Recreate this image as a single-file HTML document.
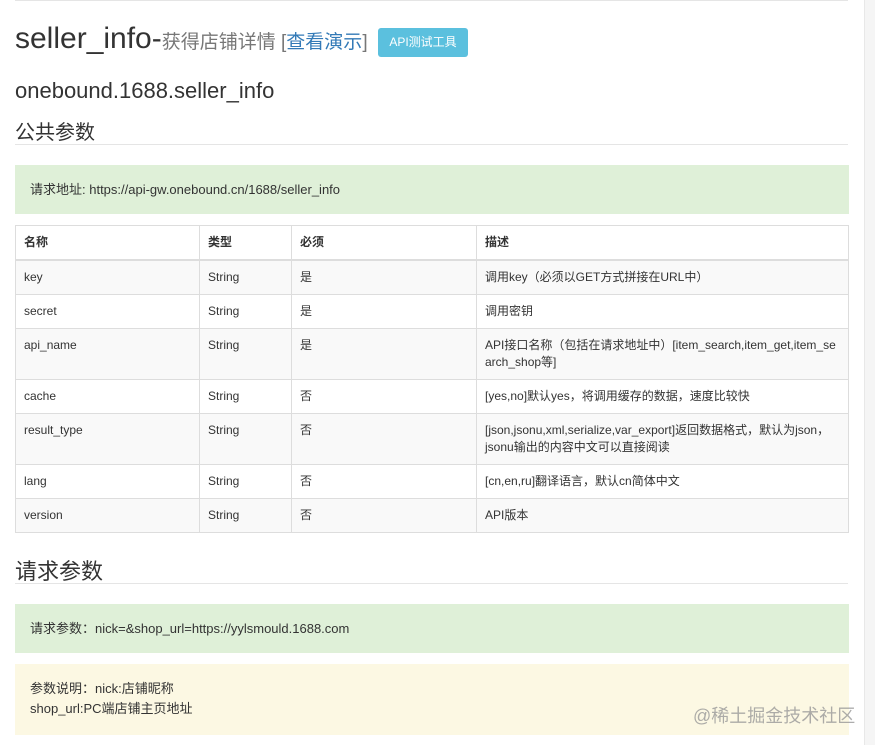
<!DOCTYPE html>
<html><head><meta charset="utf-8"><style>
body{margin:0;width:875px;height:745px;position:relative;overflow:hidden;background:#fff;font-family:"Liberation Sans","Noto Sans CJK SC",sans-serif;color:#333}
.a{position:absolute;white-space:nowrap}
.line{position:absolute;left:15px;width:833px;height:1px;background:#e5e5e5}
table{position:absolute;left:15px;top:225px;width:834px;border-collapse:collapse;font-size:12px}
td,th{border:1px solid #ddd;padding:8px 8px 0 8px;vertical-align:top;text-align:left;line-height:17px;white-space:normal}
th{font-weight:bold;height:25px;border-bottom:2px solid #ddd}
tbody tr:nth-child(odd){background:#f9f9f9}
tr.s td{height:25px}
tr.t td{height:42px}
.box{position:absolute;left:15px;width:834px;font-size:13px}
</style></head><body>
<div class="line" style="top:0"></div>
<div class="a" style="left:15px;top:22px;font-size:30px;color:#333">seller_info-<span style="font-size:19px;color:#777">获得店铺详情 [<span style="color:#337ab7">查看演示</span>]</span></div>
<div class="a" style="left:378px;top:28px;width:90px;height:29px;background:#5bc0de;border-radius:3px;color:#fff;font-size:12px;line-height:29px;text-align:center">API测试工具</div>
<div class="a" style="left:15px;top:78px;font-size:22px">onebound.1688.seller_info</div>
<div class="a" style="left:15px;top:116px;font-size:20px">公共参数</div>
<div class="line" style="top:144px"></div>
<div class="box" style="top:165px;height:49px;background:#dff0d8;line-height:49px;text-indent:15px">请求地址: https://api-gw.onebound.cn/1688/seller_info</div>
<table>
<colgroup><col style="width:184px"><col style="width:92px"><col style="width:185px"><col></colgroup>
<thead><tr><th>名称</th><th>类型</th><th>必须</th><th>描述</th></tr></thead>
<tbody>
<tr class="s"><td>key</td><td>String</td><td>是</td><td>调用key（必须以GET方式拼接在URL中）</td></tr>
<tr class="s"><td>secret</td><td>String</td><td>是</td><td>调用密钥</td></tr>
<tr class="t"><td>api_name</td><td>String</td><td>是</td><td>API接口名称（包括在请求地址中）[item_search,item_get,item_se arch_shop等]</td></tr>
<tr class="s"><td>cache</td><td>String</td><td>否</td><td>[yes,no]默认yes，将调用缓存的数据，速度比较快</td></tr>
<tr class="t"><td>result_type</td><td>String</td><td>否</td><td>[json,jsonu,xml,serialize,var_export]返回数据格式，默认为json，jsonu输出的内容中文可以直接阅读</td></tr>
<tr class="s"><td>lang</td><td>String</td><td>否</td><td>[cn,en,ru]翻译语言，默认cn简体中文</td></tr>
<tr class="s"><td>version</td><td>String</td><td>否</td><td>API版本</td></tr>
</tbody></table>
<div class="a" style="left:15px;top:554px;font-size:22px">请求参数</div>
<div class="line" style="top:583px"></div>
<div class="box" style="top:604px;height:49px;background:#dff0d8;line-height:49px;text-indent:15px">请求参数：nick=&amp;shop_url=https://yylsmould.1688.com</div>
<div class="box" style="top:664px;height:71px;background:#fcf8e3;line-height:20px;padding-top:15px;box-sizing:border-box;padding-left:15px">参数说明：nick:店铺昵称<br>shop_url:PC端店铺主页地址</div>
<div class="a" style="left:693px;top:702px;font-size:18px;color:#999;opacity:.8">@稀土掘金技术社区</div>
<div class="a" style="left:864px;top:0;width:11px;height:745px;background:#f5f5f5;border-left:1px solid #e8e8e8"></div>
</body></html>
